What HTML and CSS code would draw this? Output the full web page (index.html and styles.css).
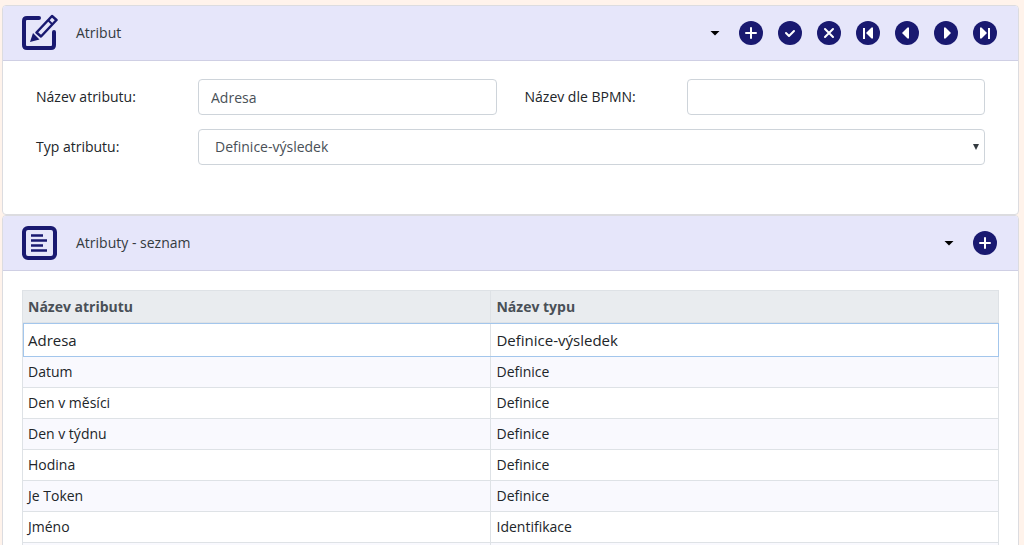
FILE: index.html
```html
<!DOCTYPE html>
<html lang="cs">
<head>
<meta charset="utf-8">
<title>Atribut</title>
<link rel="stylesheet" href="styles.css">
</head>
<body>
<main class="page">
  <section class="panel">
    <header class="panel-header">
      <svg class="panel-icon" viewBox="0 0 38 38" aria-hidden="true">
        <path d="M19 4H7Q4 4 4 7V31Q4 34 7 34H31Q34 34 34 31V18" fill="none" stroke="#191970" stroke-width="4" stroke-linecap="round"/>
        <path d="M16.500 18.500L32 2L36.500 6L21 22.500Z" fill="none" stroke="#191970" stroke-width="2.500" stroke-linejoin="round"/>
        <path d="M13 19L19.500 25.500L10 28Z" fill="#191970"/>
        <path d="M28 6L32.500 10.500" stroke="#191970" stroke-width="2"/>
      </svg>
      <h1 class="panel-title">Atribut</h1>
      <div class="toolbar">
        <button class="caret" type="button" aria-label="Nabídka"></button>
        <button class="round" type="button" aria-label="Přidat"><svg viewBox="0 0 24 24"><path class="line" d="M12 7V17M7 12H17"/></svg></button>
        <button class="round" type="button" aria-label="Uložit"><svg viewBox="0 0 24 24"><path class="line" d="M8 12L11 15L16 10"/></svg></button>
        <button class="round" type="button" aria-label="Zrušit"><svg viewBox="0 0 24 24"><path class="line" d="M8 8L16 16M16 8L8 16"/></svg></button>
        <button class="round" type="button" aria-label="První"><svg viewBox="0 0 24 24"><path class="bar" d="M8 7V18"/><path class="solid" d="M17 6.500V17.500H15.500L10 12L15.500 6.500Z"/></svg></button>
        <button class="round" type="button" aria-label="Předchozí"><svg viewBox="0 0 24 24"><path class="solid" d="M14 6.500V17.500H12.500L7 12L12.500 6.500Z"/></svg></button>
        <button class="round" type="button" aria-label="Další"><svg viewBox="0 0 24 24"><path class="solid" d="M10 6.500V17.500H11.500L17 12L11.500 6.500Z"/></svg></button>
        <button class="round" type="button" aria-label="Poslední"><svg viewBox="0 0 24 24"><path class="bar" d="M16 7V18"/><path class="solid" d="M7 6.500V17.500H8.500L14 12L8.500 6.500Z"/></svg></button>
      </div>
    </header>
    <form class="form">
      <label for="name">Název atributu:</label>
      <input class="field" id="name" type="text" value="Adresa">
      <label class="second" for="bpmn">Název dle BPMN:</label>
      <input class="field" id="bpmn" type="text">
      <label for="type">Typ atributu:</label>
      <div class="select-wrap">
        <select class="field select" id="type"><option>Definice-výsledek</option></select>
        <svg class="arrow" viewBox="0 0 6 6" aria-hidden="true"><path d="M0 0H6L3 6Z" fill="#343a40"/></svg>
      </div>
    </form>
  </section>

  <section class="panel">
    <header class="panel-header">
      <svg class="panel-icon" viewBox="0 0 38 38" aria-hidden="true">
        <rect x="4" y="4" width="31" height="30" rx="4" fill="none" stroke="#191970" stroke-width="4"/>
        <path d="M11 11.500H23M11 16.500H27M11 21.500H23M11 26.500H27" stroke="#191970" stroke-width="2.500"/>
      </svg>
      <h2 class="panel-title">Atributy - seznam</h2>
      <div class="toolbar">
        <button class="caret" type="button" aria-label="Nabídka"></button>
        <button class="round" type="button" aria-label="Přidat"><svg viewBox="0 0 24 24"><path class="line" d="M12 7V17M7 12H17"/></svg></button>
      </div>
    </header>
    <div class="list">
      <table class="table">
        <thead><tr><th>Název atributu</th><th>Název typu</th></tr></thead>
        <tbody>
          <tr class="selected"><td>Adresa</td><td>Definice-výsledek</td></tr>
          <tr><td>Datum</td><td>Definice</td></tr>
          <tr><td>Den v měsíci</td><td>Definice</td></tr>
          <tr><td>Den v týdnu</td><td>Definice</td></tr>
          <tr><td>Hodina</td><td>Definice</td></tr>
          <tr><td>Je Token</td><td>Definice</td></tr>
          <tr><td>Jméno</td><td>Identifikace</td></tr>
          <tr><td></td><td></td></tr>
        </tbody>
      </table>
    </div>
  </section>
</main>
</body>
</html>
```
FILE: styles.css
```css
* { box-sizing: border-box; }

body {
  margin: 0;
  height: 100vh;
  overflow: hidden;
  background: #fff3eb;
  color: #212529;
  font: 14px/20px "Open Sans", "Noto Sans", sans-serif;
}

.page { padding: 5px 5px 0 2px; }

.panel {
  background: #fff;
  border: 1px solid #dcdce0;
  border-radius: 4px;
}

.panel-header {
  display: flex;
  align-items: center;
  height: 55px;
  padding: 0 21px 0 17px;
  background: #e6e6fa;
  border-bottom: 1px solid #cfcfe4;
  border-radius: 3px 3px 0 0;
}

.panel-icon { width: 38px; height: 38px; }

.panel-title {
  margin: 0 0 0 18px;
  color: #343a40;
  font-size: 14px;
  font-weight: 400;
}

.toolbar {
  display: flex;
  align-items: center;
  gap: 15px;
  margin-left: auto;
}

.round {
  width: 24px;
  height: 24px;
  padding: 0;
  border: 0;
  border-radius: 50%;
  background: #191970;
}

.round svg { display: block; width: 24px; height: 24px; }

.line {
  fill: none;
  stroke: #fff;
  stroke-width: 2;
  stroke-linecap: round;
  stroke-linejoin: round;
}

.bar { stroke: #fff; stroke-width: 2; }

.solid { fill: #fff; }

.caret {
  width: 10px;
  height: 5px;
  margin-right: 4px;
  padding: 0;
  border: 0;
  background: #000;
  clip-path: polygon(0 0, 100% 0, 50% 100%);
}

.form {
  display: grid;
  grid-template-columns: 162px 1fr 190px 1fr;
  row-gap: 14px;
  align-items: center;
  padding: 18px 33px 49px 33px;
}

.second { padding-left: 28px; }

.field {
  display: block;
  width: 100%;
  height: 36px;
  padding: 0 12px;
  border: 1px solid #ced4da;
  border-radius: 4px;
  background: #fff;
  color: #495057;
  font: inherit;
}

.select-wrap { position: relative; grid-column: 2 / -1; }

.select { appearance: none; padding: 0 16px; }

.arrow {
  position: absolute;
  top: 15px;
  right: 6px;
  width: 6px;
  height: 6px;
  pointer-events: none;
}

.list { padding: 19px 19px 20px; }

.table {
  width: 100%;
  border-collapse: collapse;
  table-layout: fixed;
}

.table th,
.table td {
  height: 31px;
  padding: 0 5px;
  border: 1px solid #dee2e6;
  text-align: left;
}

.table th:first-child { width: 48%; }

.table th {
  height: 32px;
  background: #e9ecef;
  color: #495057;
  font-weight: 700;
}

.table tbody tr:nth-child(even) { background: #f9f9fe; }

.table .selected {
  outline: 1px solid #a3c6ec;
  outline-offset: -1px;
}

.table .selected td { height: 34px; font-size: 15px; }
```
